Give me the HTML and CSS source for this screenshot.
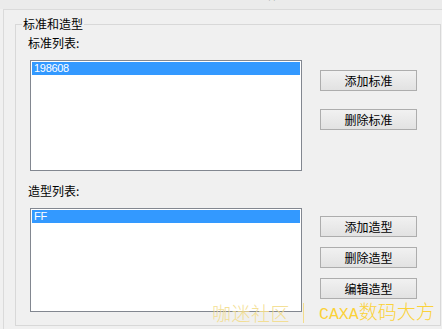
FILE: index.html
```html
<!DOCTYPE html>
<html>
<head>
    <title>标准和造型</title>
    <meta charset="UTF-8">
    <link rel="stylesheet" href="styles.css">
</head>

<body>
    <div class="titlebar"><span class="title">标准和造型编辑对话框设置</span></div>

    <div class="panel">
        <fieldset class="group">
            <legend>标准和造型</legend>

            <div class="section sectionStd">
                <div class="caption">标准列表:</div>
                <div class="row">
                    <div class="listbox listStd">
                        <div class="item selected">198608</div>
                    </div>
                    <div class="buttons buttonsStd">
                        <button class="btn">添加标准</button>
                        <button class="btn">删除标准</button>
                    </div>
                </div>
            </div>

            <div class="section sectionShape">
                <div class="caption">造型列表:</div>
                <div class="row">
                    <div class="listbox listShape">
                        <div class="item selected">FF</div>
                    </div>
                    <div class="buttons buttonsShape">
                        <button class="btn">添加造型</button>
                        <button class="btn">删除造型</button>
                        <button class="btn">编辑造型</button>
                    </div>
                </div>
            </div>
        </fieldset>
    </div>

    <div class="watermark">
        <span class="wmLeft">咖迷社区</span><span class="wmBar"></span><span class="wmRight"><span class="wmLatin">CAXA</span>数码大方</span>
    </div>
</body>

</html>
```

FILE: styles.css
```css
html, body {
    margin: 0;
    padding: 0;
}

body {
    position: relative;
    width: 442px;
    height: 329px;
    overflow: hidden;
    background: #f0f0f0;
    font-family: "Noto Sans CJK SC", "Liberation Sans", sans-serif;
    font-size: 12px;
    color: #000;
}

.titlebar {
    height: 9px;
    overflow: hidden;
    background: #ebebeb;
    padding-left: 168px;
}

.title {
    display: block;
    margin-top: -13px;
    line-height: 14px;
    font-size: 12px;
    color: #222;
}

.panel {
    margin-left: 3px;
    height: 320px;
    border-top: 1px solid #dadada;
    border-left: 1px solid #dadada;
    padding-top: 7px;
}

.group {
    box-sizing: border-box;
    margin: 0 0 0 11px;
    padding: 0;
    width: 426px;
    height: 309px;
    border: 1px solid #d8d8d8;
    min-width: 0;
}

.group legend {
    margin-left: 6px;
    padding: 0 1px;
    line-height: 14px;
}

.section {
    padding-left: 12px;
}

.sectionStd {
    padding-top: 5px;
}

.sectionShape {
    padding-top: 13px;
}

.caption {
    line-height: 14px;
}

.row {
    display: flex;
    gap: 18px;
    margin-top: 10px;
    margin-left: 2px;
}

.listbox {
    box-sizing: border-box;
    width: 272px;
    border: 1px solid #828790;
    background: #fff;
    padding: 1px;
}

.listStd {
    height: 111px;
}

.listShape {
    height: 104px;
}

.item {
    height: 13px;
    line-height: 13px;
    padding-left: 2px;
    font-family: "Liberation Sans", sans-serif;
    font-size: 11px;
    letter-spacing: -0.3px;
}

.item.selected {
    background: #3399ff;
    color: #fff;
}

.buttons {
    display: flex;
    flex-direction: column;
}

.buttonsStd {
    gap: 18px;
    padding-top: 10px;
}

.buttonsShape {
    gap: 10px;
    padding-top: 8px;
}

.btn {
    box-sizing: border-box;
    width: 97px;
    height: 21px;
    margin: 0;
    padding: 0;
    border: 1px solid #adadad;
    border-radius: 0;
    background: linear-gradient(#f1f1f1, #e2e2e2);
    font-family: "Noto Sans CJK SC", sans-serif;
    font-size: 12px;
    line-height: 19px;
    color: #000;
}

.watermark {
    position: absolute;
    left: 212px;
    top: 300px;
    display: flex;
    align-items: center;
    height: 26px;
    font-family: "Noto Sans CJK SC", sans-serif;
    font-size: 19px;
    font-weight: 300;
    line-height: 26px;
    white-space: nowrap;
}

.wmLeft {
    color: #f3dd8c;
    opacity: 0.9;
    letter-spacing: 0.5px;
}

.wmBar {
    width: 1px;
    height: 20px;
    margin: 0 15px 0 13px;
    background: #f3dd8c;
}

.wmRight {
    color: #fbd239;
}

.wmLatin {
    font-family: "Liberation Mono", monospace;
    font-size: 16.5px;
}
```
